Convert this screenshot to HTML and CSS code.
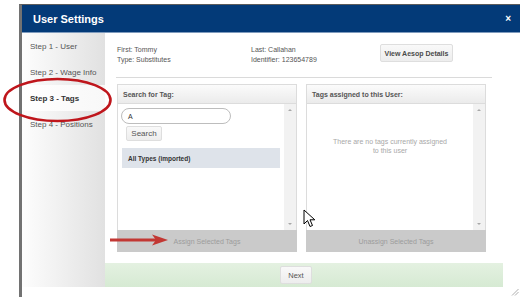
FILE: index.html
```html
<!DOCTYPE html>
<html>
<head>
<meta charset="utf-8">
<title>User Settings</title>
<link rel="stylesheet" href="styles.css">
</head>
<body>
<div class="dialog">
  <div class="titlebar">
    <span class="title">User Settings</span>
    <span class="close">×</span>
  </div>
  <div class="main">
    <nav class="steps">
      <div class="step">Step 1 - User</div>
      <div class="step">Step 2 - Wage Info</div>
      <div class="step active">Step 3 - Tags</div>
      <div class="step">Step 4 - Positions</div>
    </nav>
    <section class="content">
      <div class="info">
        <div class="info-col first">
          <div>First: Tommy</div>
          <div>Type: Substitutes</div>
        </div>
        <div class="info-col second">
          <div>Last: Callahan</div>
          <div>Identifier: 123654789</div>
        </div>
        <button class="btn aesop">View Aesop Details</button>
      </div>
      <hr class="rule">
      <div class="panels">
        <div class="panel">
          <div class="panel-head">Search for Tag:</div>
          <div class="panel-body">
            <div class="panel-inner">
              <div class="search-input">A</div>
              <button class="btn search">Search</button>
              <div class="tag-row">All Types (imported)</div>
            </div>
            <div class="scrollbar"><span class="arrow-up"></span><span class="arrow-down"></span></div>
          </div>
          <div class="panel-foot">Assign Selected Tags</div>
        </div>
        <div class="panel">
          <div class="panel-head">Tags assigned to this User:</div>
          <div class="panel-body">
            <div class="panel-inner">
              <div class="empty">There are no tags currently assigned<br>to this user</div>
            </div>
            <div class="scrollbar"><span class="arrow-up"></span><span class="arrow-down"></span></div>
          </div>
          <div class="panel-foot">Unassign Selected Tags</div>
        </div>
      </div>
      <div class="footer"><button class="btn next">Next</button></div>
    </section>
  </div>
</div>

<svg class="mark-ellipse" width="116" height="48" viewBox="0 0 116 48">
  <ellipse cx="57.5" cy="24" rx="53" ry="21" fill="none" stroke="#bf161c" stroke-width="2.6"/>
</svg>
<svg class="mark-arrow" width="62" height="16" viewBox="0 0 62 16">
  <line x1="2" y1="8" x2="50" y2="8" stroke="#c23733" stroke-width="3"/>
  <polygon points="44,2.5 60,8 44,13.5 48,8" fill="#c23733"/>
</svg>
<svg class="cursor" width="14" height="20" viewBox="0 0 14 20">
  <path d="M1 1 L1 15 L4.5 11.5 L7 17.5 L9.5 16.5 L7 10.8 L11.8 10.8 Z" fill="#fff" stroke="#000" stroke-width="1" stroke-linejoin="round"/>
</svg>
<svg class="grip" width="8" height="8" viewBox="0 0 8 8">
  <line x1="7.5" y1="1" x2="1" y2="7.5" stroke="#9a9a9a" stroke-width="0.8"/>
  <line x1="7.5" y1="4" x2="4" y2="7.5" stroke="#9a9a9a" stroke-width="0.8"/>
</svg>
</body>
</html>
```

FILE: styles.css
```css
* { box-sizing: border-box; }
html, body { margin: 0; padding: 0; }
body {
  width: 520px;
  height: 297px;
  overflow: hidden;
  background: #fff;
  font-family: "Liberation Sans", Arial, sans-serif;
  position: relative;
}
.dialog {
  margin: 4px 0 0 19px;
  width: 501px;
  height: 293px;
  border-top: 1px solid #5c5c5c;
  border-left: 3px solid #727272;
  background: #fff;
  display: flex;
  flex-direction: column;
}
.titlebar {
  height: 28px;
  flex: none;
  background: #033a78;
  border-bottom: 1px solid #7f9bbd;
  display: flex;
  align-items: center;
  justify-content: space-between;
  padding: 0 9px 0 11px;
  color: #fff;
}
.title { font-weight: bold; font-size: 11px; }
.close { font-weight: bold; font-size: 10px; }
.main { display: flex; height: 254px; flex: none; }
.steps {
  width: 83px;
  background: linear-gradient(to right, #fdfdfd, #e1e1e1);
  display: flex;
  flex-direction: column;
}
.step {
  height: 26px;
  display: flex;
  align-items: center;
  padding-left: 8px;
  font-size: 8px;
  color: #555;
  white-space: nowrap;
}
.step.active {
  background: linear-gradient(to right, #fff, #f8f8f8);
  font-weight: bold;
  color: #333;
}
.content {
  flex: 1;
  padding: 11px 0 0 12px;
  display: flex;
  flex-direction: column;
}
.info { display: flex; height: 21px; font-size: 7px; color: #555; }
.info-col { line-height: 10px; padding-top: 1px; }
.info-col.first { width: 134px; }
.info-col.second { width: 129px; }
.btn {
  font-family: inherit;
  margin: 0;
  padding: 0;
  border: 1px solid #dedede;
  background: linear-gradient(#f9f9f9, #ededed);
  border-radius: 2px;
  color: #555;
}
.aesop { width: 73px; height: 18px; font-size: 7px; font-weight: bold; color: #4a4a4a; }
.rule {
  margin: 12px 0 0 -1px;
  width: 376px;
  height: 1px;
  border: 0;
  background: #dadada;
}
.panels { display: flex; gap: 9px; margin-top: 6px; }
.panel {
  width: 180px;
  height: 168px;
  border: 1px solid #dcdcdc;
  border-bottom: 0;
  display: flex;
  flex-direction: column;
}
.panel-head {
  height: 19px;
  flex: none;
  border-bottom: 1px solid #dcdcdc;
  background: linear-gradient(#fbfbfb, #ebebeb);
  font-size: 7px;
  font-weight: bold;
  color: #555;
  display: flex;
  align-items: center;
  padding-left: 5px;
}
.panel-body { flex: 1; display: flex; }
.panel-inner { flex: 1; display: flex; flex-direction: column; align-items: flex-start; }
.scrollbar {
  width: 12px;
  background: #f2f2f2;
  display: flex;
  flex-direction: column;
  justify-content: space-between;
  align-items: center;
  padding: 5px 0 5px;
}
.arrow-up {
  width: 0; height: 0;
  border-left: 2px solid transparent;
  border-right: 2px solid transparent;
  border-bottom: 2px solid #a8a8a8;
}
.arrow-down {
  width: 0; height: 0;
  border-left: 2px solid transparent;
  border-right: 2px solid transparent;
  border-top: 2px solid #a8a8a8;
}
.panel-foot {
  height: 22px;
  flex: none;
  margin: 0 -1px;
  background: #cacaca;
  color: #9c9c9c;
  font-size: 7px;
  display: flex;
  align-items: center;
  justify-content: center;
}
.search-input {
  margin: 4px 0 0 3px;
  width: 110px;
  height: 16px;
  border: 1px solid #bdbdbd;
  border-radius: 8px;
  font-size: 7px;
  color: #333;
  padding-left: 6px;
  display: flex;
  align-items: center;
}
.search { margin: 2px 0 0 8px; width: 36px; height: 15px; font-size: 8px; color: #555; }
.tag-row {
  margin: 7px 0 0 4px;
  width: 158px;
  height: 20px;
  background: #dee3ea;
  font-size: 6.5px;
  font-weight: bold;
  color: #333;
  display: flex;
  align-items: center;
  padding-left: 6px;
}
.empty {
  margin-top: 33px;
  width: 100%;
  text-align: center;
  font-size: 7px;
  line-height: 9px;
  color: #a8a8a8;
}
.footer {
  margin: 11px 0 0 -12px;
  width: 398px;
  height: 24px;
  background: linear-gradient(#e4f1e1, #d6ead3);
  padding: 3px 0 0 175px;
}
.next { width: 32px; height: 18px; font-size: 7.5px; display: block; }
.mark-ellipse { position: absolute; left: 0; top: 76px; }
.mark-arrow { position: absolute; left: 108px; top: 232px; }
.cursor { position: absolute; left: 303px; top: 209px; }
.grip { position: absolute; left: 511px; top: 288px; }
```
